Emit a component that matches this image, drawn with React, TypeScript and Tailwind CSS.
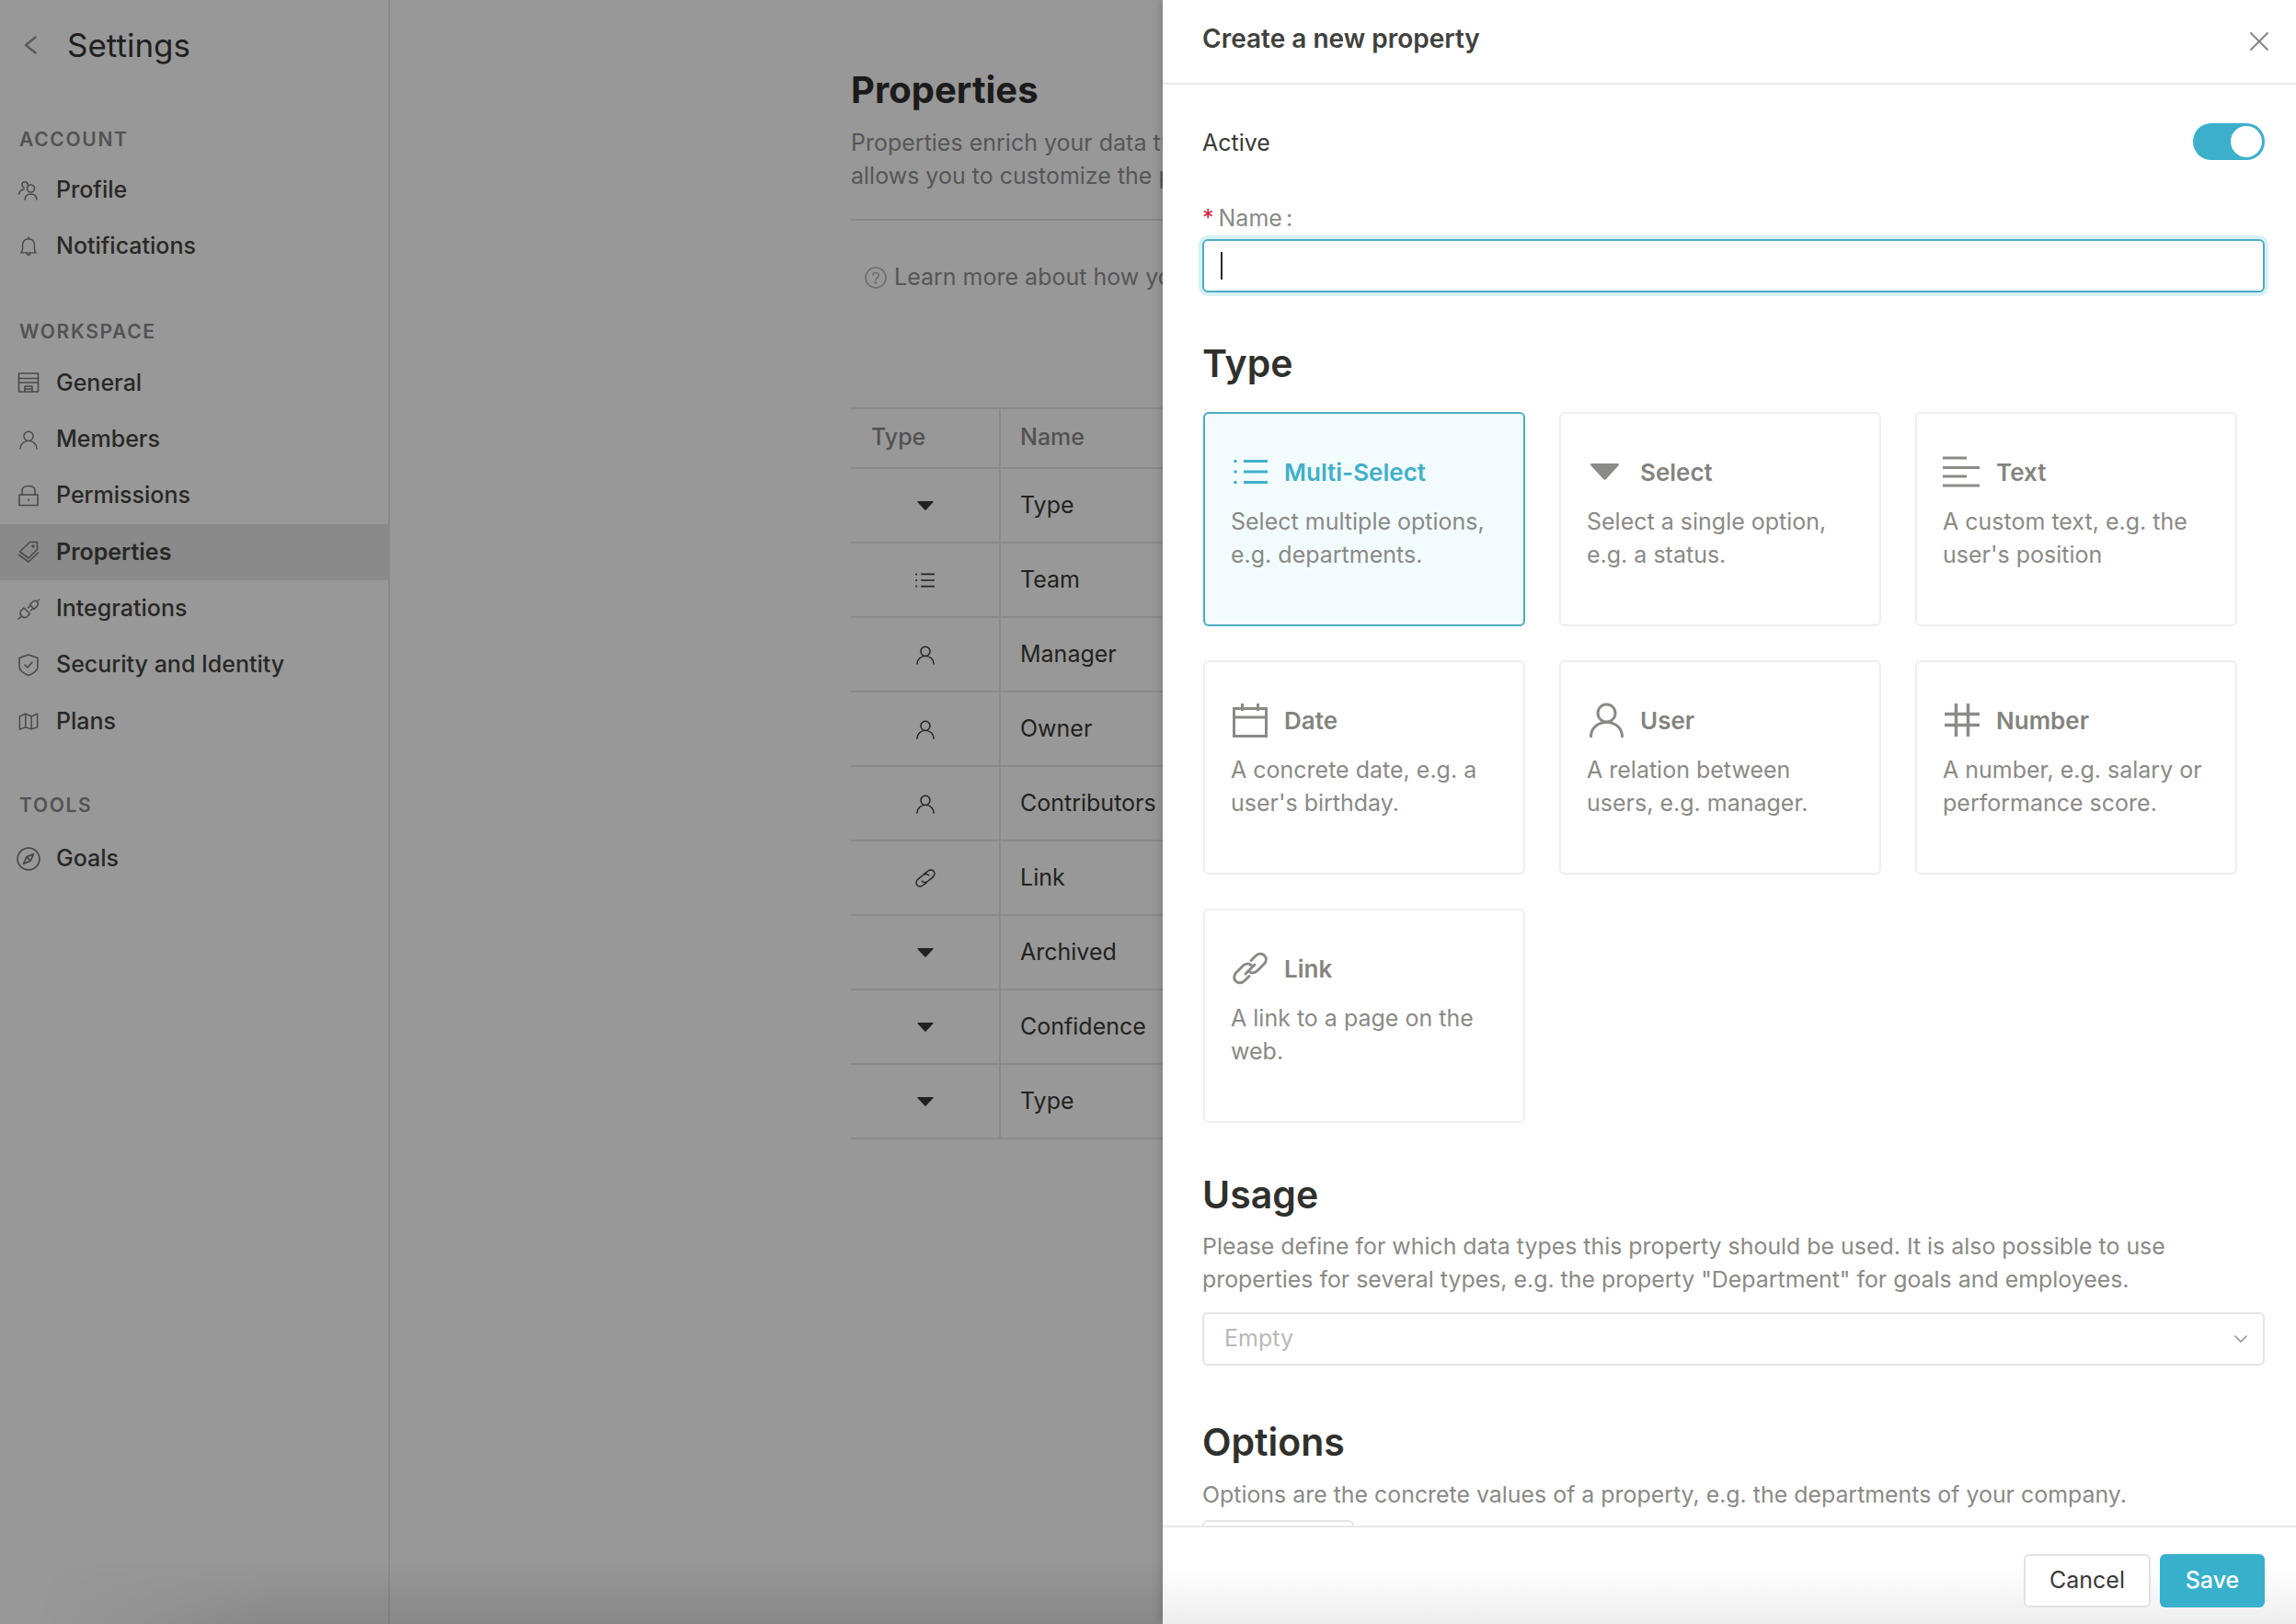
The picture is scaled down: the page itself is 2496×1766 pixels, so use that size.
import { ReactNode } from "react";
import { ChevronDown, X } from "lucide-react";

type SvgProps = { className?: string };

function Icon({ className, children }: { className?: string; children: ReactNode }) {
  return (
    <svg viewBox="0 0 24 24" fill="none" stroke="currentColor" strokeWidth="1.6" strokeLinecap="round" strokeLinejoin="round" className={`shrink-0 ${className}`}>
      {children}
    </svg>
  );
}

const ProfileIcon = ({ className }: SvgProps) => (
  <Icon className={className}>
    <circle cx="14.5" cy="10" r="4" />
    <path d="M8 22c.4-3.6 3-6 6.5-6s6.100 2.400 6.500 6" />
    <path d="M11.500 6.500C11.300 4 9.500 2.500 7.800 2.700 5.800 2.900 4.700 4.500 5 6.500c.2 1.300 1 2.200 2 2.600" />
    <path d="M1.500 16c.6-2.800 2.800-4.700 5.500-5" />
  </Icon>
);
const BellIcon = ({ className }: SvgProps) => (
  <Icon className={className}>
    <path d="M3 19.500h18c-1.500-1-2-2.500-2-5V10c0-4-3-7-7-7s-7 3-7 7v4.500c0 2.500-.5 4-2 5Z" />
    <path d="M12 1v2M10 19.500c0 1.500.8 2.500 2 2.500s2-1 2-2.500" />
  </Icon>
);
const StoreIcon = ({ className }: SvgProps) => (
  <Icon className={className}>
    <path d="M1.500 2h21v20h-21Z" />
    <path d="M1.500 7.500h21M1.500 12h21M8 22v-6h8v6M8 19h8" />
  </Icon>
);
const UserIcon = ({ className }: SvgProps) => (
  <Icon className={className}>
    <circle cx="12" cy="8" r="5.500" />
    <path d="M2 23c.4-5.500 4.500-9.500 10-9.500S21.600 17.500 22 23" />
  </Icon>
);
const LockIcon = ({ className }: SvgProps) => (
  <Icon className={className}>
    <path d="M2 11h20v11.500H2Z" />
    <path d="M5 11V6.500C5 3.500 7.500 1.500 12 1.500s7 2 7 5V11" />
    <path d="M12 16v1.500" />
  </Icon>
);
const TagIcon = ({ className }: SvgProps) => (
  <Icon className={className}>
    <path d="M2.500 12 13.500 1.500h8v8L12 19Z" />
    <path d="M1.500 15.500 12 23l10.500-10" />
    <circle cx="17" cy="6" r="1" fill="currentColor" />
  </Icon>
);
const PlugIcon = ({ className }: SvgProps) => (
  <Icon className={className}>
    <path d="M5 20.500c-2.500-2.500-2.500-5-1-6.500l3-3 6.500 6.500-3 3c-1.500 1.500-3.500 1.500-5.500 0Z" />
    <path d="M1 23l3-2.500M11.500 11l2-2M14.500 14l2-2" />
    <path d="M13.500 7.500l3-3c1.500-1.500 3.500-1.500 5 0 1 1.500 1 3.500-.5 5l-3 3ZM21 4l2.500-2" />
  </Icon>
);
const ShieldIcon = ({ className }: SvgProps) => (
  <Icon className={className}>
    <path d="M12 1 2 4.500V14c0 3.500 4 7 10 9.500 6-2.500 10-6 10-9.500V4.500Z" />
    <path d="m8 12 3 3 5-6" />
  </Icon>
);
const MapIcon = ({ className }: SvgProps) => (
  <Icon className={className}>
    <path d="M1.500 6.500 8.500 3.500 15.500 6.500 22.500 3.500V19.500L15.500 21.500 8.500 19.500 1.500 22Z" />
    <path d="M8.500 3.500v16M15.500 6.500v15" />
  </Icon>
);
const CompassIcon = ({ className }: SvgProps) => (
  <Icon className={className}>
    <circle cx="12" cy="12" r="11" />
    <path d="m17 7-7 3-3 7 7-3ZM10 10l4 4" />
  </Icon>
);
const HelpIcon = ({ className }: SvgProps) => (
  <Icon className={className}>
    <circle cx="12" cy="12" r="11" />
    <path d="M8.800 9.500C9 7.500 10.300 6.500 12 6.500c2 0 3.300 1.200 3.300 2.900 0 2.600-3.300 2.600-3.300 5" />
    <circle cx="12" cy="17.500" r=".6" fill="currentColor" />
  </Icon>
);
const ListIcon = ({ className }: SvgProps) => (
  <svg viewBox="0 0 37 28" fill="none" stroke="currentColor" strokeWidth="3" className={className}>
    <path d="M11 2.500h26M11 14h26M11 25.500h26" />
    <circle cx="2" cy="2.500" r="1.800" fill="currentColor" stroke="none" />
    <circle cx="2" cy="14" r="1.800" fill="currentColor" stroke="none" />
    <circle cx="2" cy="25.500" r="1.800" fill="currentColor" stroke="none" />
  </svg>
);
const TriangleIcon = ({ className }: SvgProps) => (
  <svg viewBox="0 0 31 18" fill="currentColor" className={className}>
    <path d="M1.500 0h28c1.300 0 1.900 1.300 1.100 2.200L16.700 17.300c-.6.700-1.800.7-2.400 0L.4 2.200C-.4 1.300.2 0 1.500 0Z" />
  </svg>
);
const LinesIcon = ({ className }: SvgProps) => (
  <svg viewBox="0 0 40 34" fill="none" stroke="currentColor" strokeWidth="3" className={className}>
    <path d="M0 2h26M0 12.500h40M0 22h26M0 32h40" />
  </svg>
);
const CalendarIcon = ({ className }: SvgProps) => (
  <svg viewBox="0 0 38 38" fill="none" stroke="currentColor" strokeWidth="3" className={className}>
    <path d="M1.500 6.500h35v30h-35Z" />
    <path d="M1.500 16h35M10.500 1v8M27.500 1v8" />
  </svg>
);
const BigUserIcon = ({ className }: SvgProps) => (
  <svg viewBox="0 0 37 38" fill="none" stroke="currentColor" strokeWidth="3" strokeLinecap="round" className={className}>
    <circle cx="18.500" cy="11.500" r="9.500" />
    <path d="M1.500 37c0-9 7-15.500 17-15.500s17 6.500 17 15.500" />
  </svg>
);
const LinkIcon = ({ className }: SvgProps) => (
  <svg viewBox="0 0 38 36" fill="none" stroke="currentColor" strokeWidth="3" strokeLinecap="round" className={className}>
    <path d="M20 9.500 25 4.500c3-3 7-3 9.500-.5s2.500 6.500-.5 9.500L27 20.500c-3 3-7 3-9 1" />
    <path d="M18 26.500 13 31.500c-3 3-7 3-9.500 .5S1 25.500 4 22.500L11 15.500c3-3 7-3 9-1" />
    <path d="M14 24l10-10" />
  </svg>
);
const HashIcon = ({ className }: SvgProps) => (
  <svg viewBox="0 0 38 36" fill="none" stroke="#6e6e6a" strokeOpacity="0.8" strokeWidth="3.500" className={className}>
    <path d="M0 11.500h38M0 23.500h38M12.500 0v36M25.500 0v36" />
  </svg>
);
const SmallLinkIcon = ({ className }: SvgProps) => (
  <Icon className={className}>
    <path d="M10.500 7 15 3.500c2.500-2 5.500-1.500 7 .5s1 5-1.500 7L15 15.500c-2.500 2-5.500 1.500-7 0" />
    <path d="M13.500 17 9 20.500c-2.500 2-5.500 1.500-7-.5s-1-5 1.500-7L9 8.500c2.500-2 5.500-1.500 7 0" />
  </Icon>
);

function NavItem({ icon, label, active }: { icon: ReactNode; label: string; active?: boolean }) {
  return (
    <div className={`flex h-[61.33px] items-center pl-[19px] ${active ? "bg-[#8a8a8a]" : ""}`}>
      <span className="flex w-[24px] justify-center text-[#4a4a4a]">{icon}</span>
      <span className={`ml-[18px] text-[25px] text-[#282826] ${active ? "font-semibold" : "font-medium"}`}>{label}</span>
    </div>
  );
}

function NavLabel({ children }: { children: ReactNode }) {
  return <div className="flex h-[44px] items-center pl-[21px] text-[21px] font-semibold tracking-[0.08em] text-[#535353]">{children}</div>;
}

const rows: { kind: "select" | "list" | "user" | "link"; name: string }[] = [
  { kind: "select", name: "Type" },
  { kind: "list", name: "Team" },
  { kind: "user", name: "Manager" },
  { kind: "user", name: "Owner" },
  { kind: "user", name: "Contributors" },
  { kind: "link", name: "Link" },
  { kind: "select", name: "Archived" },
  { kind: "select", name: "Confidence" },
  { kind: "select", name: "Type" },
];

function RowIcon({ kind }: { kind: string }) {
  if (kind === "select") return <TriangleIcon className="h-[10px] w-[18px]" />;
  if (kind === "list") return <ListIcon className="h-[16px] w-[21px]" />;
  if (kind === "user") return <UserIcon className="h-[22px] w-[22px]" />;
  return <SmallLinkIcon className="h-[22px] w-[22px]" />;
}

function TypeCard({ icon, title, text, active }: { icon: ReactNode; title: string; text: ReactNode; active?: boolean }) {
  return (
    <div className={`h-[233px] rounded-[6px] border-2 pt-[43px] pl-[28px] ${active ? "border-[#4dabc1] bg-[#f2fbfd]" : "border-[#efefef] bg-white"}`}>
      <div className="flex h-[40px] items-center">
        <span className={`flex w-[40px] justify-end ${active ? "text-[#3fb0ca]" : "text-[#8a8a86]"}`}>{icon}</span>
        <span className={`ml-[18px] text-[26px] font-semibold ${active ? "text-[#3fb0ca]" : "text-[#84847f]"}`}>{title}</span>
      </div>
      <p className="mt-[16px] whitespace-nowrap text-[25px] leading-[36px] text-[#8a8a86]">{text}</p>
    </div>
  );
}

export default function App() {
  return (
    <div className="relative flex h-screen w-screen overflow-hidden bg-[#989898] [font-family:Inter,sans-serif]">
      {/* Settings sidebar */}
      <aside className="w-[424px] shrink-0 border-r-2 border-[#8a8a8a]">
        <div className="flex h-[98px] items-center pl-[26px]">
          <svg viewBox="0 0 14 20" fill="none" stroke="#5c5c5c" strokeWidth="2.5" strokeLinecap="round" strokeLinejoin="round" className="h-[20px] w-[14px]">
            <path d="M12.500 1.500 2 10l10.500 8.500" />
          </svg>
          <span className="ml-[33px] text-[35px] text-[#1f1f1f]">Settings</span>
        </div>
        <div className="mt-[32px]">
          <NavLabel>ACCOUNT</NavLabel>
          <div className="mt-[2px]">
            <NavItem icon={<ProfileIcon className="h-[24px] w-[24px]" />} label="Profile" />
            <NavItem icon={<BellIcon className="h-[24px] w-[22px]" />} label="Notifications" />
          </div>
        </div>
        <div className="mt-[40px]">
          <NavLabel>WORKSPACE</NavLabel>
          <div className="mt-[3px]">
            <NavItem icon={<StoreIcon className="h-[24px] w-[24px]" />} label="General" />
            <NavItem icon={<UserIcon className="h-[22px] w-[22px]" />} label="Members" />
            <NavItem icon={<LockIcon className="h-[24px] w-[24px]" />} label="Permissions" />
            <NavItem icon={<TagIcon className="h-[26px] w-[24px]" />} label="Properties" active />
            <NavItem icon={<PlugIcon className="h-[24px] w-[24px]" />} label="Integrations" />
            <NavItem icon={<ShieldIcon className="h-[26px] w-[24px]" />} label="Security and Identity" />
            <NavItem icon={<MapIcon className="h-[22px] w-[24px]" />} label="Plans" />
          </div>
        </div>
        <div className="mt-[39px]">
          <NavLabel>TOOLS</NavLabel>
          <div className="mt-[5px]">
            <NavItem icon={<CompassIcon className="h-[26px] w-[26px]" />} label="Goals" />
          </div>
        </div>
      </aside>

      {/* Properties page, partly hidden by the panel */}
      <main className="min-w-0 flex-1 overflow-hidden pl-[501px] whitespace-nowrap">
        <h1 className="mt-[71px] text-[40px] leading-[54px] font-bold text-[#1b1b1b]">Properties</h1>
        <p className="mt-[12px] text-[25px] leading-[36px] text-[#565656]">
          Properties enrich your data types with additional context.
          <br />
          allows you to customize the platform for your company.
        </p>
        <div className="mt-[29px] h-[2px] bg-[#8a8a8a]" />
        <div className="mt-[44px] flex h-[36px] items-center pl-[15px] text-[25px] text-[#565656]">
          <HelpIcon className="h-[24px] w-[24px] text-[#6e6e6e]" />
          <span className="ml-[8px] shrink-0">Learn more about how you can use properties</span>
        </div>
        <div className="mt-[123px] border-t-2 border-[#8a8a8a]">
          <div className="grid h-[65px] grid-cols-[163px_1fr] border-b-2 border-[#8a8a8a] text-[25px] font-medium text-[#525252]">
            <div className="flex items-center border-r-2 border-[#8a8a8a] pb-[2px] pl-[22px]">Type</div>
            <div className="flex items-center pb-[2px] pl-[21px]">Name</div>
          </div>
          {rows.map((row, i) => (
            <div key={i} className="grid h-[81px] grid-cols-[163px_1fr] border-b-2 border-[#8a8a8a] text-[25px] text-[#222220]">
              <div className="flex items-center justify-center border-r-2 border-[#8a8a8a]">
                <RowIcon kind={row.kind} />
              </div>
              <div className="flex items-center pl-[21px]">{row.name}</div>
            </div>
          ))}
        </div>
      </main>

      {/* Slide-over panel */}
      <section className="relative z-10 flex h-full w-[1232px] shrink-0 flex-col bg-white shadow-[-2px_0_10px_rgba(0,0,0,0.18)]">
        <header className="flex h-[92px] shrink-0 items-center justify-between border-b-2 border-[#e8e8e8] pr-[22px] pb-[6px] pl-[43px]">
          <h2 className="text-[28px] font-semibold text-[#41413d]">Create a new property</h2>
          <X className="mt-[6px] h-[36px] w-[36px] text-[#858585]" strokeWidth={1.25} />
        </header>

        <div className="min-h-0 flex-1 overflow-hidden pt-[42px] pr-[34px] pl-[43px]">
          <div className="flex h-[40px] items-center justify-between">
            <span className="pt-[4px] text-[25px] text-[#3a3a36]">Active</span>
            <span className="flex h-[40px] w-[78px] items-center justify-end rounded-full bg-[#3cb0cb] pr-[3px]">
              <span className="h-[34px] w-[34px] rounded-full bg-white" />
            </span>
          </div>

          <div className="mt-[47px] flex h-[34px] items-center text-[25px] text-[#8a8a86]">
            <span className="mr-[5px] text-[#d4213d]">*</span>
            Name<span className="ml-[4px]">:</span>
          </div>
          <div className="mt-[5px] flex h-[58px] items-center rounded-[6px] border-2 border-[#4dabc1] pl-[18px] shadow-[0_0_0_4px_#d6f1f6]">
            <span className="h-[30px] w-[2px] bg-[#2a2a2a]" />
          </div>

          <h3 className="mt-[49px] h-[56px] text-[41px] leading-[56px] font-semibold text-[#30302c]">Type</h3>
          <div className="mt-[25px] ml-[1px] grid grid-cols-[350px_350px_350px] gap-x-[37px] gap-y-[37px]">
            <TypeCard
              active
              icon={<ListIcon className="h-[28px] w-[37px]" />}
              title="Multi-Select"
              text={<>Select multiple options,<br />e.g. departments.</>}
            />
            <TypeCard
              icon={<TriangleIcon className="mr-[5px] h-[18px] w-[31px]" />}
              title="Select"
              text={<>Select a single option,<br />e.g. a status.</>}
            />
            <TypeCard
              icon={<LinesIcon className="h-[34px] w-[40px]" />}
              title="Text"
              text={<>A custom text, e.g. the<br />user's position</>}
            />
            <TypeCard
              icon={<CalendarIcon className="h-[38px] w-[38px]" />}
              title="Date"
              text={<>A concrete date, e.g. a<br />user's birthday.</>}
            />
            <TypeCard
              icon={<BigUserIcon className="h-[38px] w-[37px]" />}
              title="User"
              text={<>A relation between<br />users, e.g. manager.</>}
            />
            <TypeCard
              icon={<HashIcon className="h-[36px] w-[38px]" />}
              title="Number"
              text={<>A number, e.g. salary or<br />performance score.</>}
            />
            <TypeCard
              icon={<LinkIcon className="h-[36px] w-[38px]" />}
              title="Link"
              text={<>A link to a page on the<br />web.</>}
            />
          </div>

          <h3 className="mt-[50px] h-[56px] text-[41px] leading-[56px] font-semibold text-[#30302c]">Usage</h3>
          <p className="mt-[10px] whitespace-nowrap text-[24.9px] leading-[36px] text-[#8a8a86]">
            Please define for which data types this property should be used. It is also possible to use
            <br />
            properties for several types, e.g. the property "Department" for goals and employees.
          </p>
          <div className="mt-[18px] flex h-[58px] items-center justify-between rounded-[6px] border-2 border-[#e4e4e4] pr-[12px] pl-[22px] text-[25px] text-[#b9b9b7]">
            Empty
            <ChevronDown className="h-[24px] w-[24px] text-[#8f8f8f]" strokeWidth={1.5} />
          </div>

          <h3 className="mt-[55px] h-[56px] text-[41px] leading-[56px] font-semibold text-[#30302c]">Options</h3>
          <p className="mt-[11px] whitespace-nowrap text-[24.9px] leading-[36px] text-[#8a8a86]">
            Options are the concrete values of a property, e.g. the departments of your company.
          </p>
          <div className="mt-[10px] h-[58px] w-[165px] rounded-[6px] border-2 border-[#e4e4e4]" />
        </div>

        <footer className="flex h-[107px] shrink-0 items-start justify-end gap-[10px] border-t-2 border-[#e8e8e8] bg-gradient-to-b from-white from-40% to-[#eeeeee] pt-[29px] pr-[34px]">
          <button className="h-[58px] w-[138px] rounded-[6px] border-2 border-[#e2e2e2] bg-white text-[25px] text-[#3a3a36]">Cancel</button>
          <button className="h-[58px] w-[114px] rounded-[6px] bg-[#38b0cc] text-[25px] font-medium text-white">Save</button>
        </footer>
      </section>

      {/* soft shadow along the bottom of the dimmed page */}
      <div className="pointer-events-none absolute right-[1232px] bottom-0 left-0 h-[70px] bg-gradient-to-t from-black/10 to-transparent [mask-image:linear-gradient(to_right,transparent_40px,black_300px)]" />
    </div>
  );
}
